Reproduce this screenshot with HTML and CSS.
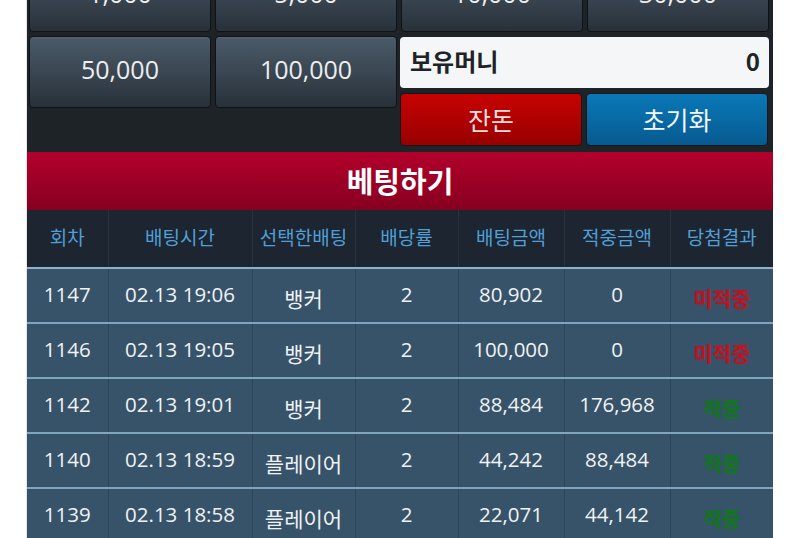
FILE: index.html
```html
<!DOCTYPE html>
<html lang="ko">
<head>
<meta charset="utf-8">
<title>베팅하기</title>
<link rel="stylesheet" href="styles.css">
</head>
<body>
<div class="wrap">
  <div class="panel">
    <div class="grid top">
      <button class="chip">1,000</button>
      <button class="chip">5,000</button>
      <button class="chip">10,000</button>
      <button class="chip">30,000</button>
    </div>
    <div class="grid lower">
      <button class="chip">50,000</button>
      <button class="chip">100,000</button>
      <div class="side">
        <div class="money"><span>보유머니</span><span>0</span></div>
        <div class="actions">
          <button class="act red">잔돈</button>
          <button class="act blue">초기화</button>
        </div>
      </div>
    </div>
  </div>
  <div class="title">베팅하기</div>
  <table class="list">
    <colgroup>
      <col style="width:81px"><col style="width:144px"><col style="width:103px"><col style="width:103px"><col style="width:106px"><col style="width:106px"><col>
    </colgroup>
    <thead>
      <tr><th>회차</th><th>배팅시간</th><th>선택한배팅</th><th>배당률</th><th>배팅금액</th><th>적중금액</th><th>당첨결과</th></tr>
    </thead>
    <tbody>
      <tr><td>1147</td><td>02.13 19:06</td><td class="ko">뱅커</td><td>2</td><td>80,902</td><td>0</td><td class="lose">미적중</td></tr>
      <tr><td>1146</td><td>02.13 19:05</td><td class="ko">뱅커</td><td>2</td><td>100,000</td><td>0</td><td class="lose">미적중</td></tr>
      <tr><td>1142</td><td>02.13 19:01</td><td class="ko">뱅커</td><td>2</td><td>88,484</td><td>176,968</td><td class="win">적중</td></tr>
      <tr><td>1140</td><td>02.13 18:59</td><td class="ko">플레이어</td><td>2</td><td>44,242</td><td>88,484</td><td class="win">적중</td></tr>
      <tr><td>1139</td><td>02.13 18:58</td><td class="ko">플레이어</td><td>2</td><td>22,071</td><td>44,142</td><td class="win">적중</td></tr>
    </tbody>
  </table>
</div>
</body>
</html>
```
FILE: styles.css
```css
html, body {
  margin: 0;
  padding: 0;
  background: #ffffff;
  overflow: hidden;
}
body {
  font-family: "Open Sans", "Noto Sans CJK KR", sans-serif;
}
.wrap {
  width: 746px;
  margin: -40px 0 0 27px;
  box-shadow: -1px 0 0 #e4e6e8;
}
.panel {
  background: #1e2327;
  padding: 0 4px 6px 2px;
}
.grid {
  display: grid;
  grid-template-columns: repeat(4, 182px);
  column-gap: 4px;
}
.top {
  margin-bottom: 4px;
}
.chip {
  height: 72px;
  border: 1px solid #101316;
  border-radius: 4px;
  background: linear-gradient(#4b5b69, #28313a);
  color: #eceef0;
  font-family: "Open Sans", sans-serif;
  font-size: 25px;
  padding: 0 0 7px;
  box-shadow: inset 0 1px 0 rgba(255,255,255,0.06);
}
.lower .chip {
  align-self: start;
}
.side {
  grid-column: 3 / span 2;
  display: flex;
  flex-direction: column;
  gap: 5px;
  padding-top: 1px;
  margin-left: -1px;
}
.money {
  height: 51px;
  background: #f5f6f8;
  border-radius: 4px;
  display: flex;
  align-items: center;
  justify-content: space-between;
  padding: 0 9px 4px 10px;
  box-sizing: border-box;
  font-family: "Noto Sans CJK KR", sans-serif;
  font-weight: 700;
  font-size: 24px;
  color: #202326;
}
.actions {
  display: grid;
  grid-template-columns: 182px 182px;
  column-gap: 4px;
}
.act {
  height: 53px;
  border-radius: 4px;
  border: 1px solid #14181b;
  font-family: "Noto Sans CJK KR", sans-serif;
  font-size: 25px;
  padding: 0 0 2px;
}
.red {
  background: linear-gradient(#c70202, #980000);
  color: #f6dede;
}
.blue {
  background: linear-gradient(#0a78b8, #075a90);
  color: #f2f6fa;
}
.title {
  height: 58px;
  background: linear-gradient(#b3002c, #86001f);
  color: #ffffff;
  font-family: "Noto Sans CJK KR", sans-serif;
  font-weight: 700;
  font-size: 29px;
  display: flex;
  align-items: center;
  justify-content: center;
  padding-bottom: 2px;
  box-sizing: border-box;
}
.list {
  width: 746px;
  border-collapse: collapse;
  table-layout: fixed;
}
.list th {
  height: 53px;
  background: #1c2530;
  color: #519fd8;
  font-family: "Noto Sans CJK KR", sans-serif;
  font-weight: 400;
  font-size: 19px;
  border-left: 1px solid #27323d;
  border-bottom: 2px solid #8fb2c8;
  padding: 0 0 4px;
}
.list th:first-child, .list td:first-child {
  border-left: none;
}
.list td {
  height: 49px;
  background: #37536a;
  color: #f0f2f4;
  font-size: 20.5px;
  text-align: center;
  border-left: 1px solid #2b4457;
  border-bottom: 2px solid #7fa4bd;
  padding: 0 0 4px;
}
.list td.ko {
  font-family: "Noto Sans CJK KR", sans-serif;
  font-size: 21px;
  padding: 4px 0 0;
}
.list td.lose, .list td.win {
  font-family: "Noto Sans CJK KR", sans-serif;
  font-weight: 700;
  font-size: 20.5px;
  padding: 4px 0 0;
}
.lose {
  color: #bd1424 !important;
  text-shadow: 0 0 1px rgba(189,20,36,0.6);
}
.win {
  color: #12761f !important;
  text-shadow: 0 0 1px rgba(18,118,31,0.6);
}
```
